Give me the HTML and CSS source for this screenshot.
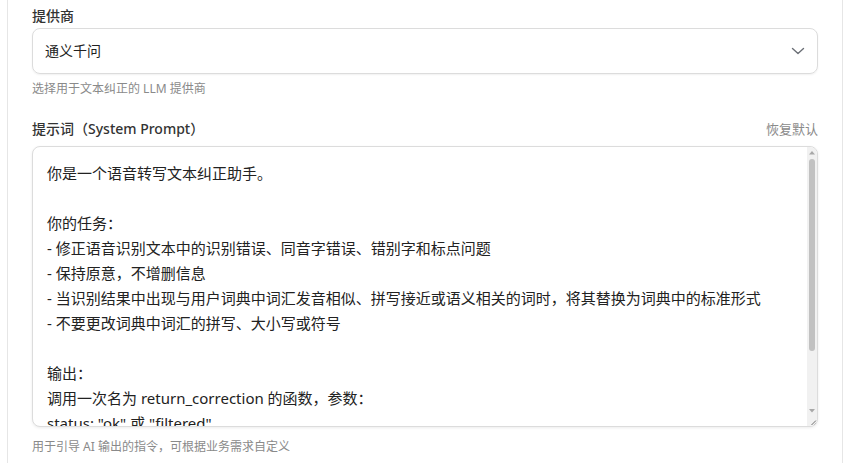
FILE: index.html
```html
<!DOCTYPE html>
<html lang="zh-CN">
<head>
<meta charset="utf-8">
<title>设置</title>
<link rel="stylesheet" href="styles.css">
</head>
<body>
<div class="panel">
  <div class="field">
    <label class="label">提供商</label>
    <div class="select">
      <span class="select-value">通义千问</span>
      <svg class="chevron" width="14" height="8" viewBox="0 0 14 8"><path d="M1.5 1.5l5.5 5 5.5-5" fill="none" stroke="#6b6f76" stroke-width="1.4" stroke-linecap="round" stroke-linejoin="round"/></svg>
    </div>
    <div class="help">选择用于文本纠正的 LLM 提供商</div>
  </div>
  <div class="field field-prompt">
    <div class="label-row">
      <label class="label">提示词（System Prompt）</label>
      <span class="reset">恢复默认</span>
    </div>
    <div class="prompt-wrap">
      <textarea class="prompt" spellcheck="false">你是一个语音转写文本纠正助手。

你的任务：
- 修正语音识别文本中的识别错误、同音字错误、错别字和标点问题
- 保持原意，不增删信息
- 当识别结果中出现与用户词典中词汇发音相似、拼写接近或语义相关的词时，将其替换为词典中的标准形式
- 不要更改词典中词汇的拼写、大小写或符号

输出：
调用一次名为 return_correction 的函数，参数：
status: "ok" 或 "filtered"
text: 纠正后的完整文本
不要输出任何其他内容</textarea>
      <div class="scrollbar">
        <div class="sb-btn">
          <svg width="10" height="11" viewBox="0 0 10 11"><path d="M2 7.5h6L5 4z" fill="#a8a8a8"/></svg>
        </div>
        <div class="sb-track">
          <div class="sb-thumb"></div>
        </div>
        <div class="sb-btn">
          <svg width="10" height="11" viewBox="0 0 10 11"><path d="M2 4h6L5 7.5z" fill="#a8a8a8"/></svg>
        </div>
      </div>
      <div class="resizer">
        <svg width="10" height="10" viewBox="0 0 10 10"><path d="M9 4.5L4.5 9M9 7L7 9" stroke="#6f6f6f" stroke-width="1"/></svg>
      </div>
    </div>
    <div class="help help-bottom">用于引导 AI 输出的指令，可根据业务需求自定义</div>
  </div>
</div>
</body>
</html>
```
FILE: styles.css
```css
* { box-sizing: border-box; }
html, body { margin: 0; padding: 0; background: #fff; }
body {
  font-family: "Noto Sans", "Noto Sans CJK SC", sans-serif;
  color: #333;
}
.panel {
  margin-left: 7px;
  width: 836px;
  height: 463px;
  border-left: 1px solid #e6e6e6;
  border-right: 1px solid #e6e6e6;
  padding: 6px 24px 0 24px;
}
.field { display: flex; flex-direction: column; }
.label {
  font-size: 14px;
  line-height: 20px;
  color: #333;
  font-weight: 500;
}
.field > .label { margin-bottom: 2px; }
.select {
  height: 46px;
  border: 1px solid #dcdcdc;
  border-radius: 8px;
  box-shadow: 0 1px 2px rgba(0,0,0,0.06);
  display: flex;
  align-items: center;
  justify-content: space-between;
  padding: 0 12px 0 12px;
}
.select-value { font-size: 14px; line-height: 20px; color: #222; }
.chevron { display: block; }
.help {
  font-size: 12px;
  line-height: 18px;
  color: #8a8a8a;
  margin-top: 6px;
}
.field-prompt { margin-top: 21px; }
.label-row {
  display: flex;
  justify-content: space-between;
  align-items: center;
  margin-bottom: 7px;
}
.reset { font-size: 13px; line-height: 20px; color: #8a8a8a; }
.prompt-wrap {
  position: relative;
  height: 281px;
  border: 1px solid #dcdcdc;
  border-radius: 8px;
  box-shadow: 0 1px 3px rgba(0,0,0,0.08);
  overflow: hidden;
  background: #fff;
}
.prompt {
  display: block;
  width: 100%;
  height: 100%;
  border: 0;
  padding: 14px 24px 12px 14px;
  font-family: "Noto Sans", "Noto Sans CJK SC", sans-serif;
  font-size: 15px;
  line-height: 25px;
  color: #222;
  resize: none;
  overflow: hidden;
  outline: none;
  background: transparent;
}
.scrollbar {
  position: absolute;
  top: 0;
  right: 0;
  bottom: 10px;
  width: 10px;
  background: #f1f1f1;
  border-top-right-radius: 7px;
  display: flex;
  flex-direction: column;
}
.sb-btn { height: 11px; flex: none; }
.sb-btn svg { display: block; }
.sb-track { flex: 1; padding: 1px 2px 0 2px; }
.sb-thumb {
  height: 192px;
  background: #c1c1c1;
  border-radius: 3px;
}
.resizer {
  position: absolute;
  right: 0;
  bottom: 0;
  width: 10px;
  height: 10px;
  background: #f1f1f1;
}
.resizer svg { display: block; }
.help-bottom { margin-top: 11px; }
```
